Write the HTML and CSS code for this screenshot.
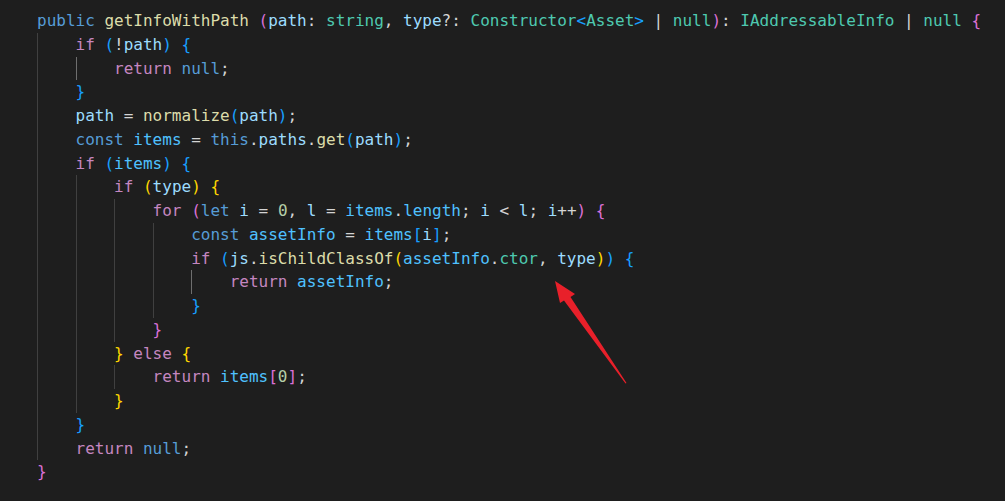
FILE: index.html
```html
<!DOCTYPE html>
<html lang="en">
<head>
<meta charset="utf-8">
<title>getInfoWithPath</title>
<link rel="stylesheet" href="styles.css">
</head>
<body>
<div class="editor">
  <div class="ln"><span class="c"><span class="kw">public</span> <span class="fn">getInfoWithPath</span> <span class="b2">(</span><span class="v">path</span>: <span class="t">string</span>, <span class="v">type</span>?: <span class="t">Constructor</span><span class="b3">&lt;</span><span class="t">Asset</span><span class="b3">&gt;</span> | <span class="t">null</span><span class="b2">)</span>: <span class="t">IAddressableInfo</span> | <span class="t">null</span> <span class="b2">{</span></span></div>
  <div class="ln"><span class="ind g"></span><span class="c"><span class="ct">if</span> <span class="b3">(</span>!<span class="v">path</span><span class="b3">)</span> <span class="b3">{</span></span></div>
  <div class="ln"><span class="ind g"></span><span class="ind ga"></span><span class="c"><span class="ct">return</span> <span class="kw">null</span>;</span></div>
  <div class="ln"><span class="ind g"></span><span class="c"><span class="b3">}</span></span></div>
  <div class="ln"><span class="ind g"></span><span class="c"><span class="v">path</span> = <span class="fn">normalize</span><span class="b3">(</span><span class="v">path</span><span class="b3">)</span>;</span></div>
  <div class="ln"><span class="ind g"></span><span class="c"><span class="kw">const</span> <span class="cn">items</span> = <span class="kw">this</span>.<span class="v">paths</span>.<span class="fn">get</span><span class="b3">(</span><span class="v">path</span><span class="b3">)</span>;</span></div>
  <div class="ln"><span class="ind g"></span><span class="c"><span class="ct">if</span> <span class="b3">(</span><span class="cn">items</span><span class="b3">)</span> <span class="b3">{</span></span></div>
  <div class="ln"><span class="ind g"></span><span class="ind g"></span><span class="c"><span class="ct">if</span> <span class="b1">(</span><span class="v">type</span><span class="b1">)</span> <span class="b1">{</span></span></div>
  <div class="ln"><span class="ind g"></span><span class="ind g"></span><span class="ind g"></span><span class="c"><span class="ct">for</span> <span class="b2">(</span><span class="kw">let</span> <span class="v">i</span> = <span class="n">0</span>, <span class="v">l</span> = <span class="cn">items</span>.<span class="cn">length</span>; <span class="v">i</span> &lt; <span class="v">l</span>; <span class="v">i</span>++<span class="b2">)</span> <span class="b2">{</span></span></div>
  <div class="ln"><span class="ind g"></span><span class="ind g"></span><span class="ind g"></span><span class="ind g"></span><span class="c"><span class="kw">const</span> <span class="cn">assetInfo</span> = <span class="cn">items</span><span class="b3">[</span><span class="v">i</span><span class="b3">]</span>;</span></div>
  <div class="ln"><span class="ind g"></span><span class="ind g"></span><span class="ind g"></span><span class="ind g"></span><span class="c"><span class="ct">if</span> <span class="b3">(</span><span class="v">js</span>.<span class="fn">isChildClassOf</span><span class="b1">(</span><span class="cn">assetInfo</span>.<span class="t">ctor</span>, <span class="v">type</span><span class="b1">)</span><span class="b3">)</span> <span class="b3">{</span></span></div>
  <div class="ln"><span class="ind g"></span><span class="ind g"></span><span class="ind g"></span><span class="ind g"></span><span class="ind ga"></span><span class="c"><span class="ct">return</span> <span class="cn">assetInfo</span>;</span></div>
  <div class="ln"><span class="ind g"></span><span class="ind g"></span><span class="ind g"></span><span class="ind g"></span><span class="c"><span class="b3">}</span></span></div>
  <div class="ln"><span class="ind g"></span><span class="ind g"></span><span class="ind g"></span><span class="c"><span class="b2">}</span></span></div>
  <div class="ln"><span class="ind g"></span><span class="ind g"></span><span class="c"><span class="b1">}</span> <span class="ct">else</span> <span class="b1">{</span></span></div>
  <div class="ln"><span class="ind g"></span><span class="ind g"></span><span class="ind g"></span><span class="c"><span class="ct">return</span> <span class="cn">items</span><span class="b2">[</span><span class="n">0</span><span class="b2">]</span>;</span></div>
  <div class="ln"><span class="ind g"></span><span class="ind g"></span><span class="c"><span class="b1">}</span></span></div>
  <div class="ln"><span class="ind g"></span><span class="c"><span class="b3">}</span></span></div>
  <div class="ln"><span class="ind g"></span><span class="c"><span class="ct">return</span> <span class="kw">null</span>;</span></div>
  <div class="ln"><span class="c"><span class="b2">}</span></span></div>
</div>
<svg class="arrow" width="1005" height="501" viewBox="0 0 1005 501" aria-hidden="true">
  <polygon points="555,281 575,294 570.5,297 626.5,383 625.5,383.5 564,300.5 560,303" fill="#e8202a"/>
</svg>
</body>
</html>
```
FILE: styles.css
```css
html, body {
  margin: 0;
  padding: 0;
  background: #1e1e1e;
}

body {
  width: 1005px;
  height: 501px;
  overflow: hidden;
}

.editor {
  padding: 9px 0 0 37px;
  font-family: "DejaVu Sans Mono", "Liberation Mono", monospace;
  font-size: 16px;
  color: #d4d4d4;
}

.ln {
  display: flex;
  height: 23.75px;
  line-height: 23.75px;
}

.ind {
  flex: 0 0 4ch;
  width: 4ch;
  box-sizing: border-box;
}

.ind.g {
  border-left: 1px solid #404040;
}

.ind.ga {
  border-left: 1px solid #6e6e6e;
}

.c {
  white-space: pre;
}

.kw { color: #569cd6; }
.ct { color: #c586c0; }
.fn { color: #dcdcaa; }
.v  { color: #9cdcfe; }
.cn { color: #4fc1ff; }
.t  { color: #4ec9b0; }
.n  { color: #b5cea8; }
.b1 { color: #ffd700; }
.b2 { color: #da70d6; }
.b3 { color: #179fff; }

.arrow {
  position: absolute;
  left: 0;
  top: 0;
  pointer-events: none;
}
```
